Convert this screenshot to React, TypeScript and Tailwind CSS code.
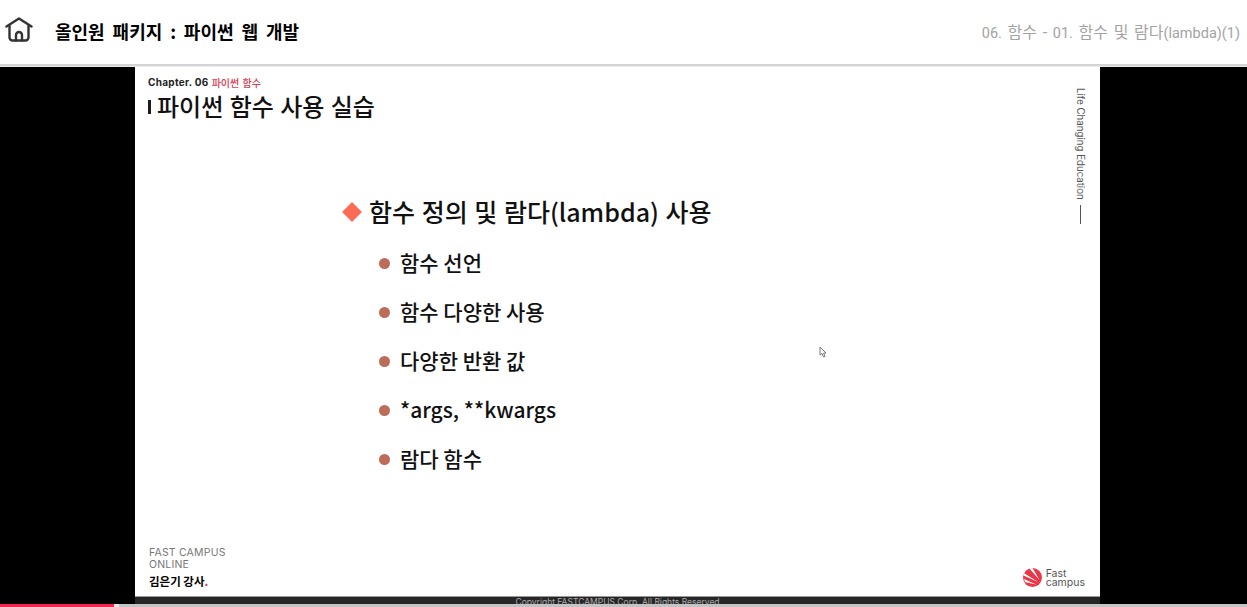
const kr = "font-['Noto_Sans_CJK_KR',sans-serif]"
const ui = "font-['Roboto','Noto_Sans_CJK_KR',sans-serif]"

const items = ["함수 선언", "함수 다양한 사용", "다양한 반환 값", "*args, **kwargs", "람다 함수"]

function HomeIcon() {
  return (
    <svg width="28" height="25" viewBox="0 0 28 25" fill="none" stroke="#333" strokeWidth="2.4" strokeLinecap="round" strokeLinejoin="round">
      <path d="M1.500 9.500 14 1.500l12.500 8" />
      <path d="M4.500 9v11.500a3 3 0 0 0 3 3h13a3 3 0 0 0 3-3V9" />
      <path d="M11 23.500v-5.500a3 3 0 0 1 6 0v5.500" />
    </svg>
  )
}

function FastLogo() {
  return (
    <svg width="19" height="19" viewBox="0 0 19 19">
      <circle cx="9.500" cy="9.500" r="9.500" fill="#e8394a" />
      <path d="M15 14 0 4.500 0.500 7.500zM16.500 12 6 0 9.500 0zM13 16.500 1 11 2 14z" fill="#fff" />
    </svg>
  )
}

function Cursor() {
  return (
    <svg width="8" height="12" viewBox="0 0 8 12" fill="#fff" stroke="#777" strokeWidth="1">
      <path d="M1 1v8l2-1.600L4.500 11 6 10.400 4.600 7H7z" />
    </svg>
  )
}

export default function App() {
  return (
    <div className="flex flex-col w-[1247px] h-[607px] overflow-hidden bg-white">
      <header className="flex items-center h-[64px] shrink-0 pl-[5px] pr-[7px] bg-white">
        <span className="-mt-[6px]">
          <HomeIcon />
        </span>
        <h1 className={`-mt-[2px] ml-[22px] text-[18px] font-bold text-black [word-spacing:3.800px] ${kr}`}>올인원 패키지 : 파이썬 웹 개발</h1>
        <span className={`mt-[1px] ml-auto text-[16px] text-[#a3a3a3] [word-spacing:1.700px] ${ui}`}>
          <span className="text-[14.500px]">06.</span> 함수 - <span className="text-[14.500px]">01.</span> 함수 및 람다<span className="text-[14.500px]">(lambda)(1)</span>
        </span>
      </header>
      <div className="h-[2px] shrink-0 bg-[#d4d4d6]" />
      <div className="h-[1px] shrink-0 bg-[#ececec]" />

      <div className="flex flex-1 min-h-0 bg-black">
        <div className="w-[135px] shrink-0" />
        <main className="flex flex-col w-[965px] shrink-0">
          <div className="relative flex flex-1 min-h-0 bg-white">
            <div className="flex flex-col flex-1 min-w-0 pl-[13px] pt-[9px] pb-[7px]">
              <p className="flex items-center gap-[3px] h-[13px] text-[10px] leading-[13px] font-bold tracking-[0.3px] text-[#222] font-['Inter',sans-serif]">
                Chapter. 06 <span className={`text-[10px] leading-[13px] font-medium tracking-normal text-[#d8394f] [word-spacing:1px] ${kr}`}>파이썬 함수</span>
              </p>
              <h2 className={`flex items-center h-[33px] text-[24px] leading-[33px] font-medium text-[#111] [word-spacing:1px] ${kr}`}>
                <span className="w-[3px] h-[14px] mr-[6px] mt-[3px] bg-[#1c1c1c]" />파이썬 함수 사용 실습
              </h2>

              <div className="flex flex-col pl-[195px] pt-[72px]">
                <div className={`flex items-center gap-[10px] h-[36px] text-[25px] font-medium text-[#111] [word-spacing:1px] ${kr}`}>
                  <span className="w-[14px] h-[14px] ml-[2px] rotate-45 bg-[#fb6a55]" />
                  함수 정의 및 람다(lambda) 사용
                </div>
                <ul className="flex flex-col gap-[19px] pl-[36px] pt-[18px]">
                  {items.map((item) => (
                    <li key={item} className={`flex items-center gap-[10px] h-[30px] text-[21px] font-medium text-[#111] ${kr}`}>
                      <span className="w-[11px] h-[11px] rounded-full bg-[#bc6c58]" />
                      {item}
                    </li>
                  ))}
                </ul>
              </div>

              <div className="mt-auto pl-[1px]">
                <p className="text-[10.500px] leading-[12px] tracking-[0.2px] text-[#777] font-['Inter',sans-serif]">FAST CAMPUS<br />ONLINE</p>
                <p className={`mt-[2px] text-[11.500px] leading-[16px] font-bold text-black ${kr}`}>김은기 강사<span className="text-[#d8394f]">.</span></p>
              </div>
            </div>

            <div className="flex flex-col items-end shrink-0 pr-[15px] pt-[21px] pb-[9px]">
              <div className="flex flex-col items-center gap-[5px]">
                <span className="[writing-mode:vertical-rl] text-[9.700px] leading-[10px] text-[#555] font-['Inter',sans-serif]">Life Changing Education</span>
                <span className="w-[1px] h-[19px] bg-[#555]" />
              </div>
              <div className="flex items-center gap-[4px] mt-auto">
                <FastLogo />
                <span className="text-[10.500px] leading-[9px] text-[#555] font-['Inter',sans-serif]">Fast<br />campus</span>
              </div>
            </div>

            <span className="absolute left-[684px] top-[279px]">
              <Cursor />
            </span>
          </div>
          <div className="flex justify-center h-[8px] shrink-0 overflow-hidden border-t border-[#999] bg-[#262626]">
            <span className="text-[8.500px] leading-[11px] text-[#aaa] font-['Inter',sans-serif]">Copyright FASTCAMPUS Corp. All Rights Reserved</span>
          </div>
        </main>
        <div className="flex-1" />
      </div>

      <div className="flex h-[3px] shrink-0 bg-[#c4c4c4]">
        <div className="w-[114px] bg-[#f5234f]" />
        <div className="w-[5px] bg-[#e4e4e4]" />
      </div>
    </div>
  )
}
